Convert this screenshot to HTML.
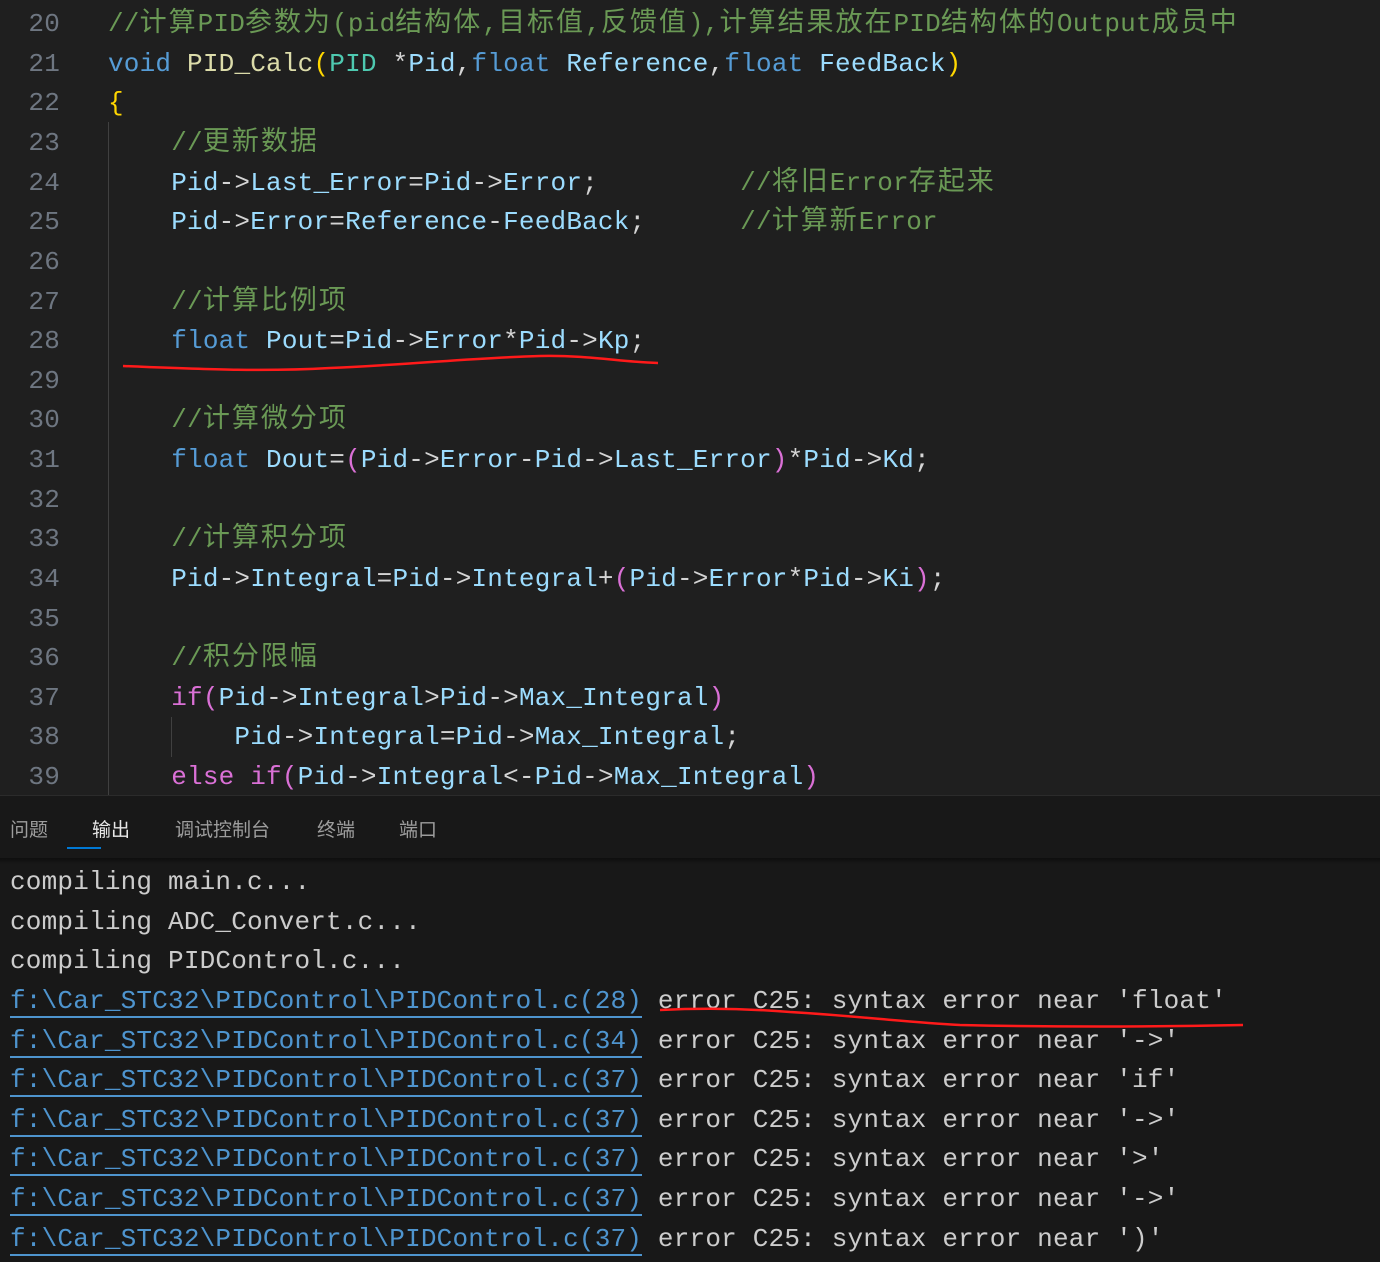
<!DOCTYPE html>
<html><head><meta charset="utf-8"><style>
body{margin:0;width:1380px;height:1261px;background:#1f1f1f;overflow:hidden;position:relative;font-family:"Liberation Mono","Noto Sans CJK SC",monospace;}
.l{position:absolute;left:0;height:39.6px;line-height:39.6px;font-size:26px;letter-spacing:0.2px;white-space:pre;}
.n{position:absolute;left:0;width:60px;text-align:right;color:#6e7681;}
.c{position:absolute;left:108px;color:#9cdcfe;}
.cm{color:#6a9955}.kw{color:#569cd6}.fn{color:#dcdcaa}.ty{color:#4ec9b0}.op{color:#d4d4d4}.y{color:#ffd700}.m{color:#da70d6}
.z{letter-spacing:2px;font-size:27px}
.g{position:absolute;width:1px;background:#404040;}
#panel{position:absolute;left:0;top:795px;width:1380px;height:466px;background:#181818;border-top:1px solid #2b2b2b;}
.tab{position:absolute;top:19px;font-family:"Liberation Sans","Noto Sans CJK SC",sans-serif;font-size:19px;color:#9d9d9d;}
.o{position:absolute;left:10px;font-size:26px;letter-spacing:0.2px;white-space:pre;color:#cccccc;height:39.6px;line-height:39.6px;}
.lk{color:#4e94ce;border-bottom:2px solid #4e94ce;}
</style></head><body>
<div class="g" style="left:108px;top:122px;height:673px"></div>
<div class="g" style="left:171px;top:717px;height:40px"></div>
<div class="l" style="top:5px"><span class="n">20</span><span class="c cm">//<span class="z">计算</span>PID<span class="z">参数为</span>(pid<span class="z">结构体</span>,<span class="z">目标值</span>,<span class="z">反馈值</span>),<span class="z">计算结果放在</span>PID<span class="z">结构体的</span>Output<span class="z">成员中</span></span></div>
<div class="l" style="top:45px"><span class="n">21</span><span class="c"><span class="kw">void</span> <span class="fn">PID_Calc</span><span class="y">(</span><span class="ty">PID</span> <span class="op">*</span>Pid<span class="op">,</span><span class="kw">float</span> Reference<span class="op">,</span><span class="kw">float</span> FeedBack<span class="y">)</span></span></div>
<div class="l" style="top:84px"><span class="n">22</span><span class="c y">{</span></div>
<div class="l" style="top:124px"><span class="n">23</span><span class="c">    <span class="cm">//<span class="z">更新数据</span></span></span></div>
<div class="l" style="top:164px"><span class="n">24</span><span class="c">    Pid<span class="op">-&gt;</span>Last_Error<span class="op">=</span>Pid<span class="op">-&gt;</span>Error<span class="op">;</span>         <span class="cm">//<span class="z">将旧</span>Error<span class="z">存起来</span></span></span></div>
<div class="l" style="top:203px"><span class="n">25</span><span class="c">    Pid<span class="op">-&gt;</span>Error<span class="op">=</span>Reference<span class="op">-</span>FeedBack<span class="op">;</span>      <span class="cm">//<span class="z">计算新</span>Error</span></span></div>
<div class="l" style="top:243px"><span class="n">26</span></div>
<div class="l" style="top:283px"><span class="n">27</span><span class="c">    <span class="cm">//<span class="z">计算比例项</span></span></span></div>
<div class="l" style="top:322px"><span class="n">28</span><span class="c">    <span class="kw">float</span> Pout<span class="op">=</span>Pid<span class="op">-&gt;</span>Error<span class="op">*</span>Pid<span class="op">-&gt;</span>Kp<span class="op">;</span></span></div>
<div class="l" style="top:362px"><span class="n">29</span></div>
<div class="l" style="top:401px"><span class="n">30</span><span class="c">    <span class="cm">//<span class="z">计算微分项</span></span></span></div>
<div class="l" style="top:441px"><span class="n">31</span><span class="c">    <span class="kw">float</span> Dout<span class="op">=</span><span class="m">(</span>Pid<span class="op">-&gt;</span>Error<span class="op">-</span>Pid<span class="op">-&gt;</span>Last_Error<span class="m">)</span><span class="op">*</span>Pid<span class="op">-&gt;</span>Kd<span class="op">;</span></span></div>
<div class="l" style="top:481px"><span class="n">32</span></div>
<div class="l" style="top:520px"><span class="n">33</span><span class="c">    <span class="cm">//<span class="z">计算积分项</span></span></span></div>
<div class="l" style="top:560px"><span class="n">34</span><span class="c">    Pid<span class="op">-&gt;</span>Integral<span class="op">=</span>Pid<span class="op">-&gt;</span>Integral<span class="op">+</span><span class="m">(</span>Pid<span class="op">-&gt;</span>Error<span class="op">*</span>Pid<span class="op">-&gt;</span>Ki<span class="m">)</span><span class="op">;</span></span></div>
<div class="l" style="top:600px"><span class="n">35</span></div>
<div class="l" style="top:639px"><span class="n">36</span><span class="c">    <span class="cm">//<span class="z">积分限幅</span></span></span></div>
<div class="l" style="top:679px"><span class="n">37</span><span class="c">    <span class="m">if</span><span class="m">(</span>Pid<span class="op">-&gt;</span>Integral<span class="op">&gt;</span>Pid<span class="op">-&gt;</span>Max_Integral<span class="m">)</span></span></div>
<div class="l" style="top:718px"><span class="n">38</span><span class="c">        Pid<span class="op">-&gt;</span>Integral<span class="op">=</span>Pid<span class="op">-&gt;</span>Max_Integral<span class="op">;</span></span></div>
<div class="l" style="top:758px"><span class="n">39</span><span class="c">    <span class="m">else</span> <span class="m">if</span><span class="m">(</span>Pid<span class="op">-&gt;</span>Integral<span class="op">&lt;-</span>Pid<span class="op">-&gt;</span>Max_Integral<span class="m">)</span></span></div>
<div id="panel">
<span class="tab" style="left:10px">问题</span>
<span class="tab" style="left:92px;color:#e7e7e7">输出</span>
<div style="position:absolute;left:67px;top:51px;width:34px;height:2px;background:#0078d4"></div>
<span class="tab" style="left:175px">调试控制台</span>
<span class="tab" style="left:317px">终端</span>
<span class="tab" style="left:399px">端口</span>
<div style="position:absolute;left:0;top:62px;width:1380px;height:6px;background:linear-gradient(#0e0e0e,#181818)"></div>
</div>
<div class="o" style="top:863px">compiling main.c...</div>
<div class="o" style="top:903px">compiling ADC_Convert.c...</div>
<div class="o" style="top:942px">compiling PIDControl.c...</div>
<div class="o" style="top:982px"><span class="lk">f:\Car_STC32\PIDControl\PIDControl.c(28)</span> error C25: syntax error near 'float'</div>
<div class="o" style="top:1022px"><span class="lk">f:\Car_STC32\PIDControl\PIDControl.c(34)</span> error C25: syntax error near '-&gt;'</div>
<div class="o" style="top:1061px"><span class="lk">f:\Car_STC32\PIDControl\PIDControl.c(37)</span> error C25: syntax error near 'if'</div>
<div class="o" style="top:1101px"><span class="lk">f:\Car_STC32\PIDControl\PIDControl.c(37)</span> error C25: syntax error near '-&gt;'</div>
<div class="o" style="top:1140px"><span class="lk">f:\Car_STC32\PIDControl\PIDControl.c(37)</span> error C25: syntax error near '&gt;'</div>
<div class="o" style="top:1180px"><span class="lk">f:\Car_STC32\PIDControl\PIDControl.c(37)</span> error C25: syntax error near '-&gt;'</div>
<div class="o" style="top:1220px"><span class="lk">f:\Car_STC32\PIDControl\PIDControl.c(37)</span> error C25: syntax error near ')'</div>
<svg style="position:absolute;left:0;top:0" width="1380" height="1261">
<path d="M123 366 C200 369 260 372 330 368 C420 364 470 358 540 356 C590 355 620 362 658 363" stroke="#ff1a1a" stroke-width="2.5" fill="none"/>
<path d="M660 1010 C700 1008 740 1008 790 1012 C860 1016 900 1022 960 1025 C1050 1027 1150 1027 1243 1025" stroke="#ff1a1a" stroke-width="2.5" fill="none"/>
</svg>
</body></html>
